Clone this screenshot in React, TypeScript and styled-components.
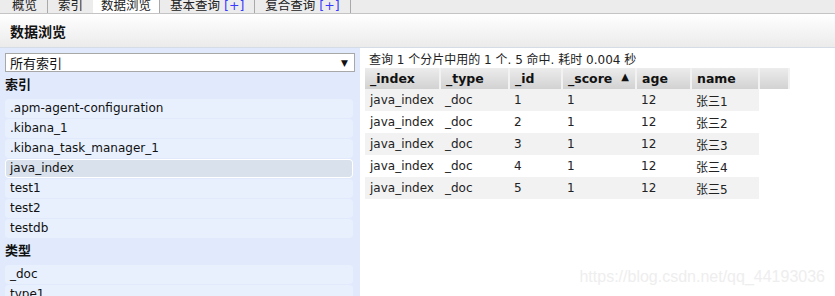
import * as React from 'react'
import styled, { createGlobalStyle } from 'styled-components'

const FONT = `"DejaVu Sans", "Noto Sans CJK SC", sans-serif`

const GlobalStyle = createGlobalStyle`
  html, body {
    margin: 0;
    padding: 0;
    background: #fff;
    overflow: hidden;
  }
  body {
    font-family: ${FONT};
    font-size: 12px;
    color: #222;
  }
`

const Page = styled.div`
  position: relative;
  height: 296px;
  display: flex;
  flex-direction: column;
`

const TabBar = styled.div`
  height: 13px;
  display: flex;
  align-items: flex-end;
  background: #ececec;
  border-bottom: 1px solid #c4c4c4;
  padding-left: 2px;
  overflow: hidden;
`

const Tab = styled.div<{ active?: boolean }>`
  height: 13px;
  line-height: 12px;
  padding: 0 10px;
  font-size: 12.5px;
  color: #222;
  border-right: 1px solid #a9a9a9;
  background: ${p => (p.active ? '#fff' : 'transparent')};
  white-space: pre;
  ${p => p.active && 'padding: 0 8px 0 8px; margin-left: -1px;'}
`

const Plus = styled.span`
  color: #3a3aff;
`

const Header = styled.div`
  height: 33px;
  display: flex;
  align-items: center;
  padding-left: 10px;
  font-size: 14px;
  font-weight: bold;
  color: #111;
  background: linear-gradient(#ffffff, #ebebeb);
  border-bottom: 1px solid #d6dce6;
`

const Body = styled.div`
  flex: 1;
  display: flex;
  min-height: 0;
`

const Side = styled.div`
  width: 350px;
  padding: 5px;
  background: #e0eafc;
  display: flex;
  flex-direction: column;
`

const Select = styled.div`
  height: 17px;
  border: 1px solid #a8a8a8;
  background: #fff;
  display: flex;
  align-items: center;
  justify-content: space-between;
  padding: 0 6px 0 4px;
  font-size: 13px;
  color: #111;
`

const Arrow = styled.span`
  font-size: 9px;
  color: #111;
`

const Label = styled.div`
  font-size: 13px;
  font-weight: bold;
  height: 20px;
  line-height: 20px;
  margin: 3px 0 4px;
  color: #111;
`

const List = styled.div`
  display: flex;
  flex-direction: column;
  gap: 1px;
`

const Item = styled.div<{ selected?: boolean }>`
  height: 19px;
  line-height: 19px;
  padding-left: 5px;
  margin-right: 2px;
  border-radius: 4px;
  font-size: 12px;
  color: #111;
  background: ${p => (p.selected ? '#d8e1ec' : '#e8f0fe')};
  box-shadow: ${p => (p.selected ? 'inset 0 0 0 1px #fff' : 'none')};
`

const Main = styled.div`
  flex: 1;
  padding: 5px 0 0 5px;
`

const Summary = styled.div`
  height: 15px;
  line-height: 15px;
  padding-left: 4px;
  font-size: 12px;
  color: #222;
`

const Table = styled.table`
  border-collapse: collapse;
  table-layout: fixed;
  font-size: 12px;
`

const Th = styled.th<{ w: number }>`
  width: ${p => p.w}px;
  height: 21px;
  padding: 0 0 0 5px;
  box-sizing: border-box;
  text-align: left;
  font-weight: bold;
  font-size: 12.5px;
  color: #111;
  background: linear-gradient(#ececec, #d2d2d2);
  border-right: 2px solid #f2f2f2;
  white-space: nowrap;
`

const Sort = styled.span`
  float: right;
  margin-right: 6px;
  font-size: 10px;
`

const Row = styled.tr<{ odd: boolean }>`
  background: ${p => (p.odd ? '#f2f2f2' : '#fff')};
`

const Td = styled.td<{ blank?: boolean }>`
  height: 22px;
  padding: 0 0 0 5px;
  color: #222;
  white-space: nowrap;
  ${p => p.blank && 'background: #fff;'}
`

const Watermark = styled.div`
  position: absolute;
  right: 10px;
  bottom: 10px;
  font-family: "Liberation Sans", Arial, sans-serif;
  font-size: 16px;
  color: #eeeeee;
`

const tabs = [
  { name: '概览' },
  { name: '索引' },
  { name: '数据浏览', active: true },
  { name: '基本查询', plus: true },
  { name: '复合查询', plus: true },
]

const indices = [
  '.apm-agent-configuration',
  '.kibana_1',
  '.kibana_task_manager_1',
  'java_index',
  'test1',
  'test2',
  'testdb',
]

const columns = [
  { key: '_index', w: 75 },
  { key: '_type', w: 69 },
  { key: '_id', w: 53 },
  { key: '_score', w: 74, sort: true },
  { key: 'age', w: 55 },
  { key: 'name', w: 68 },
  { key: '', w: 30 },
]

const rows = [1, 2, 3, 4, 5].map(n => ['java_index', '_doc', String(n), '1', '12', `张三${n}`])

export default function App() {
  return (
    <Page>
      <GlobalStyle />
      <TabBar>
        {tabs.map(t => (
          <Tab key={t.name} active={t.active}>
            {t.name}
            {t.plus && (
              <>
                {' '}
                <Plus>[+]</Plus>
              </>
            )}
          </Tab>
        ))}
      </TabBar>
      <Header>数据浏览</Header>
      <Body>
        <Side>
          <Select>
            <span>所有索引</span>
            <Arrow>▼</Arrow>
          </Select>
          <Label>索引</Label>
          <List>
            {indices.map(i => (
              <Item key={i} selected={i === 'java_index'}>
                {i}
              </Item>
            ))}
          </List>
          <Label>类型</Label>
          <List>
            <Item>_doc</Item>
            <Item>type1</Item>
          </List>
        </Side>
        <Main>
          <Summary>查询 1 个分片中用的 1 个. 5 命中. 耗时 0.004 秒</Summary>
          <Table>
            <thead>
              <tr>
                {columns.map((c, i) => (
                  <Th key={i} w={c.w}>
                    {c.key}
                    {c.sort && <Sort>▲</Sort>}
                  </Th>
                ))}
              </tr>
            </thead>
            <tbody>
              {rows.map((r, i) => (
                <Row key={i} odd={i % 2 === 0}>
                  {r.map((v, j) => (
                    <Td key={j}>{v}</Td>
                  ))}
                  <Td blank />
                </Row>
              ))}
            </tbody>
          </Table>
        </Main>
      </Body>
      <Watermark>https://blog.csdn.net/qq_44193036</Watermark>
    </Page>
  )
}
